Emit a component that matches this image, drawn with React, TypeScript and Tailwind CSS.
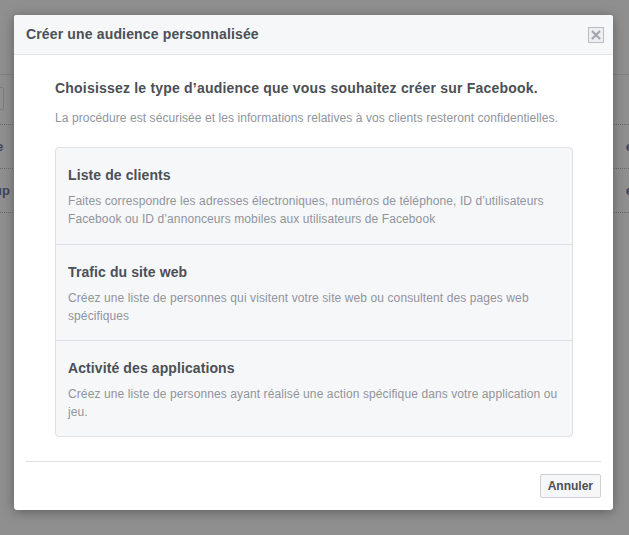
const options = [
  {
    title: "Liste de clients",
    text: "Faites correspondre les adresses électroniques, numéros de téléphone, ID d’utilisateurs Facebook ou ID d’annonceurs mobiles aux utilisateurs de Facebook",
  },
  {
    title: "Trafic du site web",
    text: "Créez une liste de personnes qui visitent votre site web ou consultent des pages web spécifiques",
  },
  {
    title: "Activité des applications",
    text: "Créez une liste de personnes ayant réalisé une action spécifique dans votre application ou jeu.",
  },
];

const CloseIcon = () => (
  <svg width="16" height="16" viewBox="0 0 16 16" fill="none">
    <rect x="0.5" y="0.5" width="15" height="15" stroke="#b9bcc2" fill="#eceef1" />
    <path d="M4 4 L12 12 M12 4 L4 12" stroke="#a0a4ab" strokeWidth="2" />
  </svg>
);

export default function App() {
  return (
    <div className="relative w-[629px] h-[535px] overflow-hidden bg-[#8f8f8f] font-['Liberation_Sans',Arial,sans-serif]">
      {/* page behind the dimmed overlay */}
      <div className="pt-[74px]">
        <div className="h-px bg-[#828282]" />
        <div className="mt-[12px] ml-[-20px] w-[24px] h-[23px] border border-[#7c7c7c] rounded-[2px]" />
        <div className="mt-[14px] border-t border-dotted border-[#6a6a6a]">
          <div className="flex justify-between h-[44px] items-center border-b border-dotted border-[#6a6a6a] text-[13px] font-bold text-[#3f4460]">
            <span className="ml-[-4px]">e</span>
            <span className="mr-[-4px]">e</span>
          </div>
          <div className="flex justify-between h-[44px] items-center border-b border-dotted border-[#6a6a6a] text-[13px] font-bold text-[#3f4460]">
            <span className="ml-[-6px]">up</span>
            <span className="mr-[-4px]">e</span>
          </div>
        </div>
      </div>

      {/* modal */}
      <div className="absolute left-[14px] top-[15px] w-[599px] h-[495px] bg-white rounded-[3px] shadow-[0_2px_12px_rgba(0,0,0,0.35)] flex flex-col">
        <div className="h-[40px] flex items-center justify-between pl-[12px] pr-[9px] bg-[#f6f7f9] border-b border-[#e5e5e5] rounded-t-[3px]">
          <span className="text-[14px] font-bold text-[#4b4f56] tracking-[0.15px]">Créer une audience personnalisée</span>
          <CloseIcon />
        </div>

        <div className="pl-[41px] pr-[40px] pt-[24px]">
          <h2 className="text-[14px] font-bold text-[#4b4f56] leading-[18px] tracking-[0.2px]">
            Choisissez le type d’audience que vous souhaitez créer sur Facebook.
          </h2>
          <p className="mt-[13px] text-[12px] text-[#90949c] leading-[16px] tracking-[0.07px]">
            La procédure est sécurisée et les informations relatives à vos clients resteront confidentielles.
          </p>

          <div className="mt-[21px] border border-[#dddfe2] rounded-[4px] bg-[#f6f7f9]">
            {options.map((o, i) => (
              <div key={o.title} className={`h-[96px] px-[12px] pt-[18px] ${i > 0 ? "border-t border-[#dddfe2]" : ""}`}>
                <div className="text-[14px] font-bold text-[#4b4f56] leading-[18px] tracking-[0.1px]">{o.title}</div>
                <div className="mt-[8px] text-[12px] text-[#90949c] leading-[18px] tracking-[0.1px]">{o.text}</div>
              </div>
            ))}
          </div>
        </div>

        <div className="mx-[12px] mt-[24px] border-t border-[#dddfe2]" />
        <div className="flex justify-end px-[12px] pt-[12px]">
          <button className="h-[24px] px-[7px] text-[12px] font-bold text-[#4b4f56] bg-[#f6f7f9] border border-[#ced0d4] rounded-[2px]">
            Annuler
          </button>
        </div>
      </div>
    </div>
  );
}
